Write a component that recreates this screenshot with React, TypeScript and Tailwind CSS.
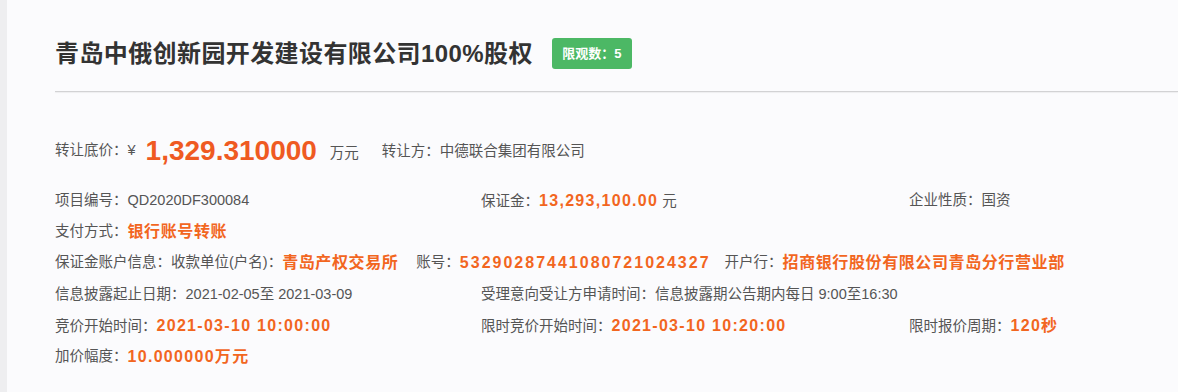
const FONT = "font-['Liberation_Sans','Noto_Sans_CJK_SC',sans-serif]";

function Label({ children }: { children: React.ReactNode }) {
  return <span className="text-[#555]">{children}</span>;
}

// orange highlighted value; digits in the source are spaced out more than the CJK text
function Value({ children, cjk }: { children: React.ReactNode; cjk?: boolean }) {
  return (
    <span
      className={`text-[16px] font-bold text-[#f2661f] ${cjk ? "tracking-[0.6px]" : "tracking-[1.3px]"}`}
    >
      {children}
    </span>
  );
}

export default function App() {
  return (
    <div className={`flex h-[392px] w-[1178px] overflow-hidden bg-[#fbfbfd] ${FONT}`}>
      {/* left gutter */}
      <div className="w-[7px] shrink-0 bg-[#eeeef0]" />

      <div className="flex flex-1 flex-col pl-[48px]">
        {/* Title */}
        <div className="mt-[38px] flex h-[31px] items-center">
          <h1 className="text-[24px] font-bold tracking-[0.4px] text-[#333]">
            青岛中俄创新园开发建设有限公司100%股权
          </h1>
          <span className="ml-[19px] flex h-[31px] w-[80px] items-center justify-center rounded-[3px] bg-[#4cb865] text-[13px] font-bold text-white">
            限观数：5
          </span>
        </div>

        <div className="mt-[22px] h-px bg-[#d2d2d4] shadow-[0_1px_1px_rgba(0,0,0,0.06)]" />

        {/* Price */}
        <div className="mt-[43px] flex h-[32px] items-center text-[14.5px]">
          <Label>转让底价：¥</Label>
          <span className="ml-[10px] text-[28px] font-bold leading-none text-[#ef5a22]">
            1,329.310000
          </span>
          <span className="ml-[13px] mt-[6px] text-[#555]">万元</span>
          <span className="ml-[23px] mt-[2px] text-[#555]">转让方：中德联合集团有限公司</span>
        </div>

        {/* Details */}
        <div className="mt-[18px] flex flex-col text-[14.5px]">
          <div className="flex h-[31px] items-center">
            <div className="w-[426px]">
              <Label>项目编号：QD2020DF300084</Label>
            </div>
            <div className="w-[428px]">
              <Label>保证金：</Label>
              <Value>13,293,100.00</Value>
              <Label> 元</Label>
            </div>
            <div>
              <Label>企业性质：国资</Label>
            </div>
          </div>

          <div className="flex h-[31px] items-center">
            <Label>支付方式：</Label>
            <Value cjk>银行账号转账</Value>
          </div>

          <div className="flex h-[32px] items-center">
            <Label>保证金账户信息：收款单位(户名)：</Label>
            <Value cjk>青岛产权交易所</Value>
            <span className="ml-[18px]">
              <Label>账号：</Label>
            </span>
            <span className="text-[16px] font-bold tracking-[2px] text-[#f2661f]">
              53290287441080721024327
            </span>
            <span className="ml-[14px]">
              <Label>开户行：</Label>
            </span>
            <Value cjk>招商银行股份有限公司青岛分行营业部</Value>
          </div>

          <div className="flex h-[31px] items-center">
            <div className="w-[426px]">
              <Label>信息披露起止日期：2021-02-05至 2021-03-09</Label>
            </div>
            <div>
              <Label>受理意向受让方申请时间：信息披露期公告期内每日 9:00至16:30</Label>
            </div>
          </div>

          <div className="flex h-[31px] items-center">
            <div className="w-[426px]">
              <Label>竞价开始时间：</Label>
              <Value>2021-03-10 10:00:00</Value>
            </div>
            <div className="w-[428px]">
              <Label>限时竞价开始时间：</Label>
              <Value>2021-03-10 10:20:00</Value>
            </div>
            <div>
              <Label>限时报价周期：</Label>
              <Value>120秒</Value>
            </div>
          </div>

          <div className="flex h-[31px] items-center">
            <Label>加价幅度：</Label>
            <Value>10.000000万元</Value>
          </div>
        </div>
      </div>
    </div>
  );
}
